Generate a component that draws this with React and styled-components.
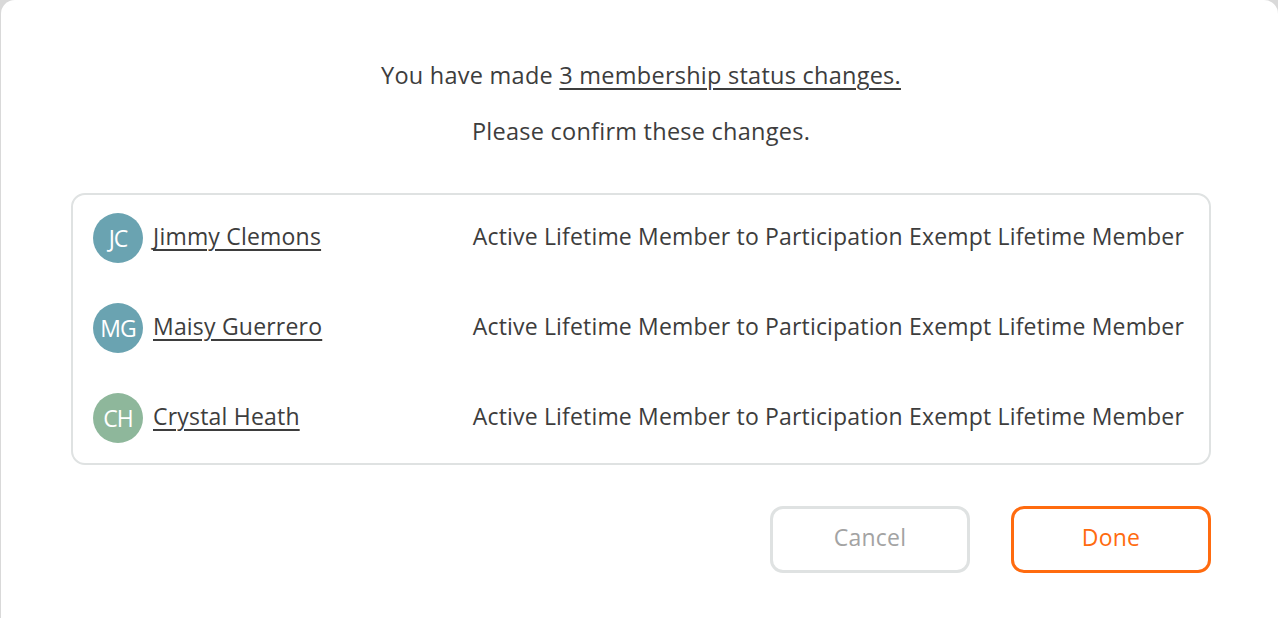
import React from "react";
import styled, { createGlobalStyle } from "styled-components";

const Global = createGlobalStyle`
  html, body { margin: 0; padding: 0; }
  body {
    background: #d9d9d9;
    font-family: "Open Sans", "Noto Sans", sans-serif;
    overflow: hidden;
  }
`;

const Dialog = styled.div`
  box-sizing: border-box;
  margin-left: 1px;
  width: 1277px;
  height: 618px;
  background: #fff;
  border-radius: 14px 14px 0 0;
  padding: 56px 67px 0 70px;
  display: flex;
  flex-direction: column;
`;

const Message = styled.p`
  margin: 0;
  text-align: center;
  font-size: 23.5px;
  letter-spacing: 0.25px;
  line-height: 38px;
  color: #3d3d3d;
  & + & { margin-top: 18px; }
`;

const Link = styled.a`
  color: #3d3d3d;
  text-decoration: underline;
  text-underline-offset: 4px;
  text-decoration-thickness: 1.5px;
  cursor: pointer;
`;

const List = styled.div`
  margin-top: 43px;
  border: 2px solid #dfe2e2;
  border-radius: 14px;
  padding: 18px 25px 20px 20px;
  display: flex;
  flex-direction: column;
  gap: 40px;
`;

const Row = styled.div`
  display: flex;
  align-items: center;
  height: 50px;
`;

const Avatar = styled.div`
  width: 50px;
  height: 50px;
  border-radius: 50%;
  background: ${(p) => p.$color};
  color: #fff;
  display: flex;
  align-items: center;
  justify-content: center;
  font-size: 23px;
  letter-spacing: -1px;
  flex-shrink: 0;
`;

const Name = styled(Link)`
  margin-left: 10px;
  font-size: 23px;
  letter-spacing: 0.2px;
  margin-top: -4px;
`;

const Change = styled.span`
  margin-left: auto;
  font-size: 23px;
  letter-spacing: 0.17px;
  color: #3d3d3d;
  margin-top: -4px;
`;

const Actions = styled.div`
  margin-top: 41px;
  display: flex;
  justify-content: flex-end;
  gap: 41px;
`;

const Button = styled.button`
  box-sizing: border-box;
  width: 200px;
  height: 67px;
  border-radius: 13px;
  background: #fff;
  border: 3px solid ${(p) => (p.$primary ? "#ff6b0f" : "#dfe2e2")};
  color: ${(p) => (p.$primary ? "#ff6b0f" : "#a3a3a3")};
  font-family: inherit;
  font-size: 23px;
  letter-spacing: 0.2px;
  padding: 0 0 5px;
  cursor: pointer;
`;

const rows = [
  { initials: "JC", name: "Jimmy Clemons", color: "#6aa3b1" },
  { initials: "MG", name: "Maisy Guerrero", color: "#6aa3b1" },
  { initials: "CH", name: "Crystal Heath", color: "#8eb79b" },
];

export default function App() {
  return (
    <>
      <Global />
      <Dialog>
        <Message>
          You have made <Link>3 membership status changes.</Link>
        </Message>
        <Message>Please confirm these changes.</Message>
        <List>
          {rows.map((r) => (
            <Row key={r.initials}>
              <Avatar $color={r.color}>{r.initials}</Avatar>
              <Name>{r.name}</Name>
              <Change>Active Lifetime Member to Participation Exempt Lifetime Member</Change>
            </Row>
          ))}
        </List>
        <Actions>
          <Button>Cancel</Button>
          <Button $primary>Done</Button>
        </Actions>
      </Dialog>
    </>
  );
}
